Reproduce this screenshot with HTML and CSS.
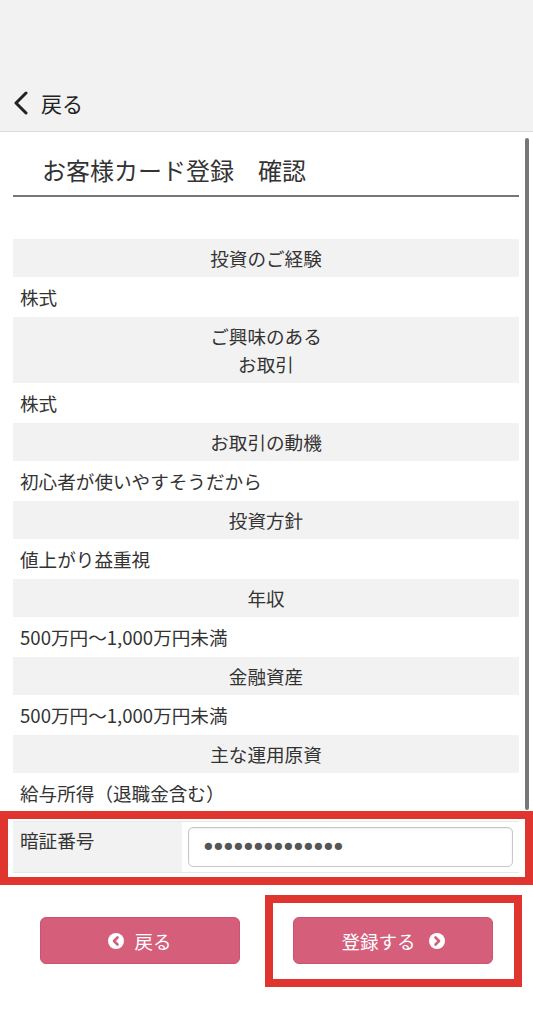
FILE: index.html
```html
<!DOCTYPE html>
<html lang="ja">
<head>
  <meta charset="utf-8">
  <meta name="viewport" content="width=device-width, initial-scale=1.0">
  <title>お客様カード登録 確認</title>
  <link rel="stylesheet" href="styles.css">
</head>
<body>

  <div class="nav">
    <a class="nav-back" href="#">
      <svg class="nav-chevron" width="16" height="24" viewBox="0 0 16 24">
        <polyline points="13,2 3,12 13,22" fill="none" stroke="#222" stroke-width="3" stroke-linecap="round" stroke-linejoin="round"/>
      </svg>
      <span>戻る</span>
    </a>
  </div>

  <div class="scrollbar"></div>

  <div class="page">
    <h1 class="title">お客様カード登録　確認</h1>

    <div class="confirm-list">
      <div class="item-head">投資のご経験</div>
      <div class="item-value">株式</div>
      <div class="item-head">ご興味のある<br>お取引</div>
      <div class="item-value">株式</div>
      <div class="item-head">お取引の動機</div>
      <div class="item-value">初心者が使いやすそうだから</div>
      <div class="item-head">投資方針</div>
      <div class="item-value">値上がり益重視</div>
      <div class="item-head">年収</div>
      <div class="item-value">500万円～1,000万円未満</div>
      <div class="item-head">金融資産</div>
      <div class="item-value">500万円～1,000万円未満</div>
      <div class="item-head">主な運用原資</div>
      <div class="item-value">給与所得（退職金含む）</div>
    </div>
  </div>

  <!-- 暗証番号 -->
  <div class="mark mark-pin">
    <div class="pin-row">
      <div class="pin-label">暗証番号</div>
      <div class="pin-field">
        <input class="pin-input" type="password" value="12345678901234" readonly>
      </div>
    </div>
  </div>

  <div class="actions">
    <button class="btn btn-back">
      <svg width="16" height="16" viewBox="0 0 16 16">
        <circle cx="8" cy="8" r="8" fill="#fff"/>
        <polyline points="9.5,4.5 6,8 9.5,11.5" fill="none" stroke="#d55e7b" stroke-width="2.6" stroke-linecap="round" stroke-linejoin="round"/>
      </svg>
      <span>戻る</span>
    </button>
    <div class="mark mark-submit">
      <button class="btn btn-submit">
        <span>登録する</span>
        <svg width="16" height="16" viewBox="0 0 16 16">
          <circle cx="8" cy="8" r="8" fill="#fff"/>
          <polyline points="6.5,4.5 10,8 6.5,11.5" fill="none" stroke="#d55e7b" stroke-width="2.6" stroke-linecap="round" stroke-linejoin="round"/>
        </svg>
      </button>
    </div>
  </div>

</body>
</html>
```

FILE: styles.css
```css
* { box-sizing: border-box; }
body {
  margin: 0;
  position: relative;
  font-family: "Noto Sans CJK JP", "Noto Sans", sans-serif;
  color: #333;
  background-color: #fff;
}

/* header */
.nav {
  padding: 88px 12px 13px;
  background-color: #f3f2f3;
  border-bottom: 1px solid #dcdcdc;
}
.nav-back {
  display: flex;
  align-items: center;
  gap: 12px;
  line-height: 30px;
  font-size: 21px;
  color: #222;
  text-decoration: none;
}
.nav-chevron {
  margin-left: 1px;
}

.scrollbar {
  position: absolute;
  left: 525px;
  top: 138px;
  width: 4px;
  height: 672px;
  border-radius: 2px;
  background-color: #777;
}

.page {
  padding: 0 14px 0 13px;
}
.title {
  margin: 22px 0 0;
  padding: 0 0 9px 29px;
  line-height: 32px;
  font-size: 24px;
  font-weight: normal;
  color: #333;
  border-bottom: 2px solid #777;
}

/* confirm items */
.confirm-list {
  margin-top: 42px;
  font-size: 18.6px;
}
.item-head,
.item-value {
  padding: 5px 7px;
  line-height: 28px;
  border-bottom: 1px solid #fff;
}
.item-head {
  text-align: center;
  background-color: #f3f2f3;
}

/* red outlines */
.mark {
  border: 8px solid #e0342f;
}
.mark-pin {
  margin-top: -2px;
  padding: 2px 6px 4px 5px;
}
.pin-row {
  display: flex;
  background-color: #f3f2f3;
  border-top: 1px solid #e8e8e8;
  border-bottom: 1px solid #e8e8e8;
  font-size: 18.6px;
}
.pin-label {
  width: 169px;
  padding: 4px 7px;
  line-height: 28px;
}
.pin-field {
  flex: 1;
  padding: 5px 6px;
  background-color: #fff;
}
.pin-input {
  display: block;
  width: 100%;
  height: 40px;
  padding: 0 12px;
  border: 1px solid #c8c8c8;
  border-radius: 5px;
  box-shadow: inset 0 1px 2px rgba(0, 0, 0, 0.08);
  font-family: "DejaVu Sans", sans-serif;
  font-size: 25px;
  letter-spacing: -4.75px;
  color: #555;
  outline: none;
}

/* buttons */
.actions {
  display: flex;
  align-items: flex-start;
  margin-top: 10px;
}
.btn {
  display: flex;
  align-items: center;
  justify-content: center;
  width: 200px;
  height: 47px;
  padding: 0;
  border: 1px solid #cc5472;
  border-radius: 6px;
  background-color: #d55e7b;
  color: #fff;
  font-family: "Noto Sans CJK JP", sans-serif;
  font-size: 18.5px;
}
.btn-back {
  gap: 10px;
  margin: 22px 0 0 40px;
}
.btn-submit {
  gap: 13px;
}
.mark-submit {
  width: 257px;
  margin-left: 25px;
  padding: 14px 20px 15px;
}
```
